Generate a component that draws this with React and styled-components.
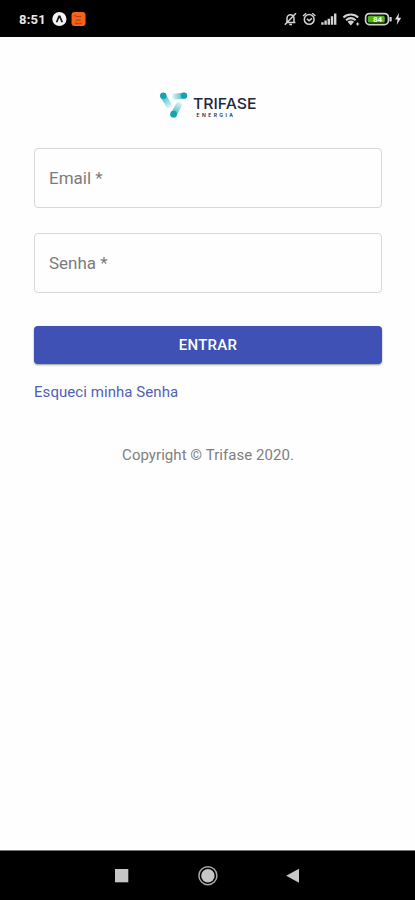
import { useState } from "react";
import styled, { createGlobalStyle } from "styled-components";

const StatusIcons = () => (
  <svg width="120" height="18" viewBox="0 0 120 18" fill="none" stroke="#d2d2d2">
    {/* muted bell */}
    <path d="M2.8 12.4h9.6M4 12V8.2a3.5 3.5 0 0 1 7 0V12M1.8 14.8 13 3.2M6.2 14.4h2.8" strokeWidth="1.5" />
    {/* alarm */}
    <circle cx="26.2" cy="9.4" r="4.9" strokeWidth="1.5" />
    <path d="M20 6 23.2 3.2M29.2 3.2 32.4 6M24 8.8l2 2 3-2.4" strokeWidth="1.5" />
    {/* signal */}
    <path d="M39.4 14.8v-2.6M42.6 14.8v-4.2M45.8 14.8V8.8M49 14.8V6.2M52.2 14.8V3.6" strokeWidth="2.4" />
    {/* wifi */}
    <path d="M60.4 7.4c4.2-3.9 10.6-3.9 14.8 0M63 10.2c2.9-2.5 6.7-2.5 9.6 0" strokeWidth="2" />
    <path d="m64.5 11.8 3.3 3.6 3.3-3.6c-2-1.6-4.6-1.6-6.6 0Z" fill="#d2d2d2" stroke="none" />
    <path d="M74.6 12.4v3.2M73 14h3.2" strokeWidth="1.2" />
    {/* battery */}
    <rect x="82.6" y="3.6" width="22.8" height="11" rx="3.8" strokeWidth="1.7" />
    <path d="M107.6 7v4.4" strokeWidth="2.2" />
    <rect x="84.8" y="5.7" width="17" height="6.8" rx="1.5" fill="#4cb414" stroke="none" />
    <text x="94.5" y="12.2" textAnchor="middle" fontSize="8" fontWeight="700" fill="#fff" stroke="none">
      84
    </text>
    <path d="m116 3-4 6.6h2.6l-1 5.4 4.6-7.2h-2.8Z" fill="#e4e4e4" stroke="none" />
  </svg>
);

const Logo = () => (
  <svg width="99" height="30" viewBox="0 0 99 30">
    <defs>
      <linearGradient id="left" x1="4" y1="5" x2="12" y2="17" gradientUnits="userSpaceOnUse">
        <stop stopColor="#35b9c3" />
        <stop offset="1" stopColor="#35b9c3" stopOpacity="0.12" />
      </linearGradient>
      <linearGradient id="right" x1="25" y1="5" x2="12" y2="7" gradientUnits="userSpaceOnUse">
        <stop stopColor="#35b9c3" />
        <stop offset="1" stopColor="#35b9c3" stopOpacity="0.05" />
      </linearGradient>
      <linearGradient id="bottom" x1="14" y1="24" x2="21" y2="12" gradientUnits="userSpaceOnUse">
        <stop stopColor="#35b9c3" />
        <stop offset="1" stopColor="#35b9c3" stopOpacity="0.12" />
      </linearGradient>
    </defs>
    <g strokeWidth="6" strokeLinecap="round">
      <path d="m4.3 6 5.4 9" stroke="url(#left)" />
      <path d="M25 5.8 16 6.4" stroke="url(#right)" />
      <path d="m14.8 24.2 5.2-9.4" stroke="url(#bottom)" />
    </g>
    <g fill="#17a2b4">
      <circle cx="4.3" cy="5.8" r="3.2" />
      <circle cx="25" cy="5.6" r="3.2" />
      <circle cx="14.6" cy="24.2" r="3.4" />
    </g>
    <LogoText x="34" y="19.3" fontSize="14.8" fontWeight="500" textLength="63.5" lengthAdjust="spacingAndGlyphs">
      TRIFASE
    </LogoText>
    <LogoText x="37.5" y="27.4" fontSize="5" fontWeight="600" textLength="36.5" lengthAdjust="spacing">
      ENERGIA
    </LogoText>
  </svg>
);

const Field = ({ id, label, type, gap }) => {
  const [value, setValue] = useState("");

  return (
    <StyledField $gap={gap}>
      {!value && <StyledLabel htmlFor={id}>{label} *</StyledLabel>}
      <StyledInput
        id={id}
        type={type}
        value={value}
        onChange={(e) => setValue(e.target.value)}
      />
    </StyledField>
  );
};

const App = () => {
  const onSubmit = (e) => {
    e.preventDefault();
  };

  return (
    <Screen>
      <GlobalStyle />
      <StatusBar>
        <StatusLeft>
          <Clock>8:51</Clock>
          <svg width="34" height="16" viewBox="0 0 34 16" fill="none">
            <circle cx="7.4" cy="8" r="7.1" fill="#f4f4f4" />
            <path d="M4.6 11.2 7 5.4h.8l2.4 5.8" stroke="#181818" strokeWidth="1.7" />
            <rect x="19.5" y="1" width="14" height="14" rx="3" fill="#f4631b" />
            <path d="m22.5 4 1.8 1.5h5M23.8 9.1h5M23 11.9c2 1 5 1 7-.2" stroke="#b34312" strokeWidth="1.2" />
          </svg>
        </StatusLeft>
        <StatusIcons />
      </StatusBar>
      <Content>
        <LogoWrapper>
          <Logo />
        </LogoWrapper>
        <form onSubmit={onSubmit}>
          <Field id="email" label="Email" type="text" gap={25} />
          <Field id="password" label="Senha" type="password" gap={33} />
          <SubmitButton type="submit">Entrar</SubmitButton>
        </form>
        <ForgotLink href="#">Esqueci minha Senha</ForgotLink>
        <Copyright>Copyright © Trifase 2020.</Copyright>
      </Content>
      <NavBar>
        <svg width="190" height="24" viewBox="0 0 190 24" fill="#c6c6c6">
          <rect x="3" y="5" width="13.3" height="13.3" />
          <circle cx="95.9" cy="11.7" r="9" fill="none" stroke="#a8a8a8" strokeWidth="1.5" />
          <circle cx="95.9" cy="11.7" r="6.7" />
          <path d="M174.2 11.7 187 4.7v14Z" />
        </svg>
      </NavBar>
    </Screen>
  );
};

export default App;

const GlobalStyle = createGlobalStyle`
  body {
    margin: 0;
    background: #fefefe;
    font-family: Roboto, "Liberation Sans", sans-serif;
  }

  * {
    box-sizing: border-box;
  }

  svg {
    display: block;
  }
`;

const Screen = styled.div`
  display: flex;
  flex-direction: column;
  height: 900px;
`;

const StatusBar = styled.header`
  display: flex;
  align-items: center;
  justify-content: space-between;
  height: 37px;
  padding: 1px 12px 0 19px;
  background: #000;
`;

const StatusLeft = styled.div`
  display: flex;
  align-items: center;
  gap: 6px;
`;

const Clock = styled.span`
  width: 27px;
  color: #e8e8e8;
  font-size: 13px;
  font-weight: 700;
  letter-spacing: 0.2px;
`;

const Content = styled.main`
  flex: 1;
  padding: 53px 33px 0 34px;
`;

const LogoWrapper = styled.div`
  display: flex;
  justify-content: center;
  height: 58px;
`;

const LogoText = styled.text`
  fill: #20283f;
  font-family: Inter, sans-serif;
`;

const StyledField = styled.div`
  position: relative;
  height: 60px;
  margin-bottom: ${({ $gap }) => $gap}px;
`;

const StyledLabel = styled.label`
  position: absolute;
  top: 0;
  left: 15px;
  color: #7c7c7c;
  font-size: 17px;
  line-height: 60px;
  letter-spacing: 0;
  pointer-events: none;
`;

const StyledInput = styled.input`
  width: 100%;
  height: 100%;
  padding: 0 15px;
  border: 1px solid #d8d8d8;
  border-radius: 4px;
  background: transparent;
  font: inherit;
  font-size: 17px;

  &:focus {
    outline: none;
    border-color: #3f51b5;
  }
`;

const SubmitButton = styled.button`
  display: block;
  width: 100%;
  height: 38px;
  padding: 0;
  border: none;
  border-radius: 4px;
  background: #3f51b5;
  box-shadow: 0 1px 2px rgba(0, 0, 0, 0.4);
  color: #fff;
  font: inherit;
  font-size: 15px;
  font-weight: 500;
  letter-spacing: 0.3px;
  text-transform: uppercase;
  cursor: pointer;
`;

const ForgotLink = styled.a`
  display: block;
  width: fit-content;
  margin-top: 18px;
  color: #5260b5;
  font-size: 15px;
  line-height: 21px;
  letter-spacing: 0.06px;
  text-decoration: none;
`;

const Copyright = styled.p`
  margin: 42px 0 0;
  color: #808080;
  font-size: 15px;
  line-height: 21px;
  letter-spacing: 0.05px;
  text-align: center;
`;

const NavBar = styled.footer`
  display: flex;
  align-items: center;
  justify-content: center;
  height: 50px;
  padding-right: 1px;
  border-top: 1px solid #777;
  background: #000;
`;
